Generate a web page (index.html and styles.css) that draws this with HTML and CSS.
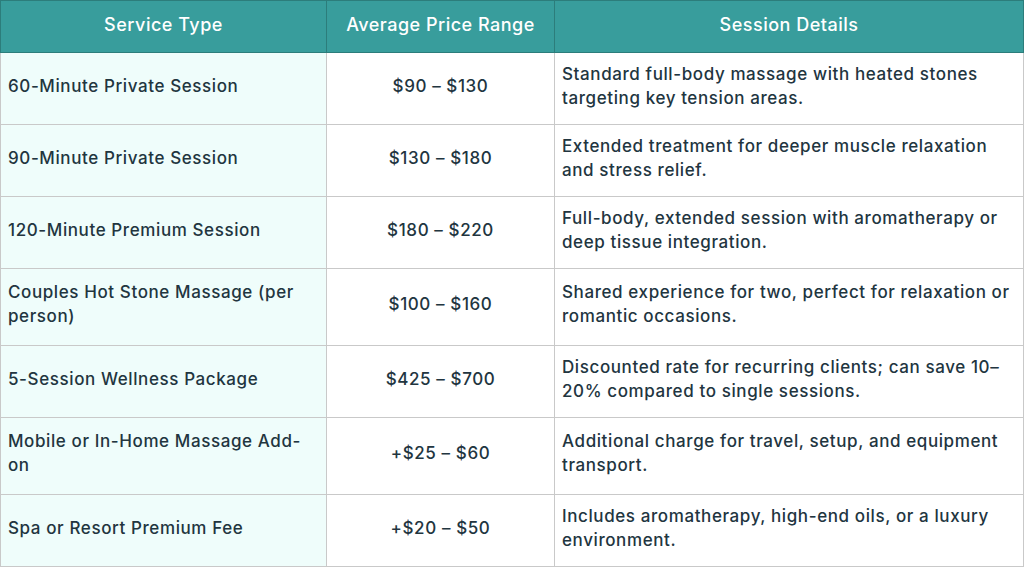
FILE: index.html
```html
<!DOCTYPE html>
<html lang="en">
<head>
<meta charset="utf-8">
<title>Hot Stone Massage Pricing</title>
<link rel="stylesheet" href="styles.css">
</head>
<body>
<table class="price-table">
  <colgroup>
    <col class="col-service">
    <col class="col-price">
    <col class="col-details">
  </colgroup>
  <thead>
    <tr>
      <th>Service Type</th>
      <th>Average Price Range</th>
      <th>Session Details</th>
    </tr>
  </thead>
  <tbody>
    <tr>
      <td class="service">60-Minute Private Session</td>
      <td class="price">$90 – $130</td>
      <td class="details">Standard full-body massage with heated stones targeting key tension areas.</td>
    </tr>
    <tr>
      <td class="service">90-Minute Private Session</td>
      <td class="price">$130 – $180</td>
      <td class="details">Extended treatment for deeper muscle relaxation and stress relief.</td>
    </tr>
    <tr>
      <td class="service">120-Minute Premium Session</td>
      <td class="price">$180 – $220</td>
      <td class="details">Full-body, extended session with aromatherapy or deep tissue integration.</td>
    </tr>
    <tr>
      <td class="service">Couples Hot Stone Massage (per person)</td>
      <td class="price">$100 – $160</td>
      <td class="details">Shared experience for two, perfect for relaxation or romantic occasions.</td>
    </tr>
    <tr>
      <td class="service">5-Session Wellness Package</td>
      <td class="price">$425 – $700</td>
      <td class="details">Discounted rate for recurring clients; can save 10–20% compared to single sessions.</td>
    </tr>
    <tr>
      <td class="service">Mobile or In-Home Massage Add-on</td>
      <td class="price">+$25 – $60</td>
      <td class="details">Additional charge for travel, setup, and equipment transport.</td>
    </tr>
    <tr>
      <td class="service">Spa or Resort Premium Fee</td>
      <td class="price">+$20 – $50</td>
      <td class="details">Includes aromatherapy, high-end oils, or a luxury environment.</td>
    </tr>
  </tbody>
</table>
</body>
</html>
```

FILE: styles.css
```css
html, body {
  margin: 0;
  padding: 0;
  background: #ffffff;
}

body {
  font-family: Inter, "Open Sans", "Liberation Sans", sans-serif;
  color: #22353f;
}

.price-table {
  width: 1023px;
  border-collapse: collapse;
  table-layout: fixed;
  font-size: 17px;
  font-weight: 500;
  letter-spacing: 0.6px;
}

.col-service { width: 326px; }
.col-price { width: 228px; }
.col-details { width: 469px; }

.price-table th {
  height: 52px;
  padding: 0 8px 4px;
  box-sizing: border-box;
  background: #389d9c;
  color: #ffffff;
  font-size: 18px;
  font-weight: 500;
  letter-spacing: 0.5px;
  text-align: center;
  border: 1px solid #2c7d7b;
}

.price-table td {
  border: 1px solid #c9c9c9;
  padding: 8px 7px 14px;
  line-height: 24px;
  vertical-align: middle;
}

.price-table tbody tr {
  height: 72px;
}

.price-table td.service {
  background: #effdfb;
  padding-top: 11px;
  padding-bottom: 17px;
}

.price-table td.price {
  text-align: center;
}
```
